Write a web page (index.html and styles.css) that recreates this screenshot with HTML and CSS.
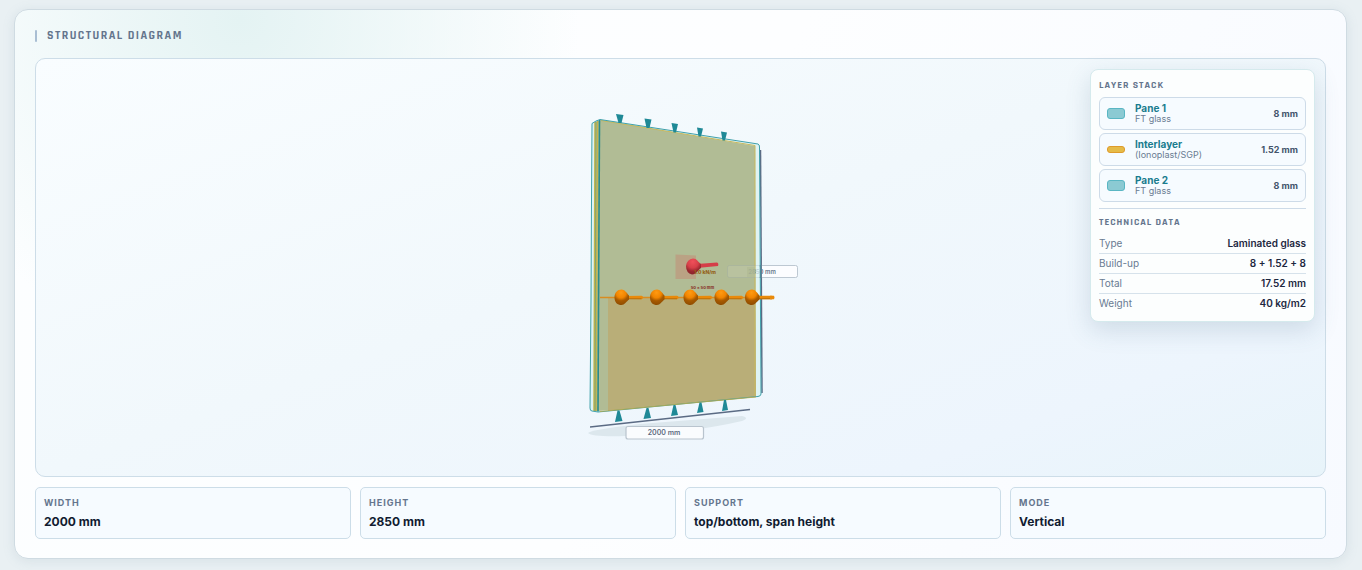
FILE: index.html
```html
<!DOCTYPE html>
<html lang="en">
<head>
<meta charset="utf-8">
<meta name="viewport" content="width=device-width, initial-scale=1">
<title>Structural Diagram</title>
<link rel="stylesheet" href="styles.css">
</head>
<body>
<main class="card">
  <h1 class="card-title">Structural Diagram</h1>
  <section class="stage">
    <svg class="scene" viewBox="550 59 261 417" role="img" aria-label="Laminated glass pane with supports and loads">
      <defs>
        <radialGradient id="orange" cx="0.45" cy="0.2" r="0.85">
          <stop offset="0" stop-color="#ff9a12"/><stop offset="0.4" stop-color="#f08400"/><stop offset="0.62" stop-color="#a85a00"/><stop offset="1" stop-color="#8a4a00"/>
        </radialGradient>
        <radialGradient id="red" cx="0.45" cy="0.2" r="0.85">
          <stop offset="0" stop-color="#f0505a"/><stop offset="0.45" stop-color="#d63f48"/><stop offset="0.7" stop-color="#9c2830"/><stop offset="1" stop-color="#84222a"/>
        </radialGradient>
        <g id="load">
          <path d="M4-1.600 20-1.800Q21.500-1.800 21.500 0T20 1.800L4 1.600Z" fill="#e98a0a"/>
          <path d="M4 .8H20V1.700H4Z" fill="#b56c0c"/>
          <path d="M-7 0C-7-5-4-8 0-8 3-8 5-5 7.500-2V2C5 4 3 7.500 0 7.500-4 7.500-7 5-7 0Z" fill="url(#orange)"/>
        </g>
      </defs>
      <path d="M588 433 Q590 430 640 424 L742 416 Q750 418 742 421 Q690 433 625 436 Q592 437 588 433Z" fill="#dce7ed"/>
      <path d="M590 427 750 409.500" stroke="#5b6b84" stroke-width="1.500"/>
      <path d="M760.500 150 762 393" stroke="#5b6b84" stroke-width="1.500"/>
      <path d="M592 123 600 119.500 759 144.500 761 396 597 412 590 410Z" fill="#def3f4"/>
      <path d="M595 122 601 120 755 146 756 397 598 411 594 411Z" fill="#b1bc95"/>
      <path d="M608 297.500H755L756 397 608 411Z" fill="#b9ae78"/>
      <path d="M595 122 594 411M597.500 121 596 411" stroke="#c3b54b" stroke-width="1.500"/>
      <path d="M601 120.500 755 145.500V396" fill="none" stroke="#c9b95d"/>
      <path d="M596 122 595 411" stroke="#699a6f" stroke-width=".7"/>
      <path d="M599.500 120 598 411.500" stroke="#2a8b88" stroke-width="1.600"/>
      <path d="M592 123.500 596 121 600 119.500 758 144Q759.500 144.500 759.500 147L761 394Q761 396 758 396.500L598 412 592 411Q590 411 590 408L591 300 591.500 200Z" fill="none" stroke="#3fa0aa"/>
      <path d="M756 397 600 411.500" stroke="#d0ac35" stroke-width=".7"/>
      <g fill="#1f8996">
        <path d="M616 114 623.500 115 621.500 123H618.500Z"/>
        <path d="M644.500 118.500 651.500 119.500 649.500 128H646.500Z"/>
        <path d="M671.500 123 678 124 676 132.500H673.500Z"/>
        <path d="M697 127.500 703 128.500 701 136.500H698.500Z"/>
        <path d="M721 131.500 727 132.500 725 140.500H722.500Z"/>
        <path d="M617.500 410.500H619.500L622.500 421 615 422Z"/>
        <path d="M646.500 408H648.500L651 418 643.500 419Z"/>
        <path d="M673.500 405H675.500L678 415 671 416Z"/>
        <path d="M699.500 402.500H701.500L703.500 412 697 413Z"/>
        <path d="M724 400H726L728 410 722 411Z"/>
      </g>
      <path d="M675.500 254.500 696 255.500V279H675.500Z" fill="#baa284"/>
      <path d="M600 297.500H755" stroke="#d98c20" stroke-width="1.500"/>
      <use href="#load" x="621.500" y="297.500"/>
      <use href="#load" x="657" y="297.500"/>
      <use href="#load" x="690.500" y="297.500"/>
      <use href="#load" x="721.500" y="297.500"/>
      <use href="#load" x="752" y="297.500"/>
      <path d="M770 295.700H774Q775 297.500 774 299.300H770Z" fill="#e98a0a"/>
      <path d="M697 264 717 262.500Q719 263 718 266L697 268Z" fill="#d53e48"/>
      <path d="M686 266Q687 259 693 258.500C697 258.500 698 262 701 264V268C698 270 697 274 692 274.500Q686 273 686 266Z" fill="url(#red)"/>
      <text class="load-text line-text" x="705" y="273.500">1.0 kN/m</text>
      <text class="load-text" x="702.500" y="289">50 x 50 mm</text>
      <rect x="727.500" y="265.500" width="70" height="12" rx="2" fill="#fff" fill-opacity=".1" stroke="#8898a6" stroke-opacity=".2"/>
      <path d="M762 265.500H795.500Q797.500 265.500 797.500 267.500V275.500Q797.500 277.500 795.500 277.500H762Z" fill="#fcfdff"/>
      <path d="M762 265.500H795.500Q797.500 265.500 797.500 267.500V275.500Q797.500 277.500 795.500 277.500H762" fill="none" stroke="#bdc8d2"/>
      <text class="dim-text side" x="762" y="274">2850 mm</text>
      <path d="M747 267H755V277H747Z" fill="#b1bc95" opacity=".8"/>
      <path d="M756 267H760V277H756Z" fill="#def3f4" opacity=".7"/>
      <path d="M760.500 265V278" stroke="#4c8c9b" stroke-width="1.500"/>
      <rect x="626" y="426.500" width="77.500" height="12.500" rx="2" fill="#fafcfe" stroke="#b9c4ce" stroke-width="1.200"/>
      <text class="dim-text" x="664" y="435">2000 mm</text>
    </svg>
    <aside class="panel">
      <h2 class="panel-title">Layer Stack</h2>
      <ul class="layers">
        <li class="layer"><span class="swatch"></span><span class="layer-name"><strong>Pane 1</strong><small>FT glass</small></span><b class="thickness">8 mm</b></li>
        <li class="layer"><span class="swatch swatch-film"></span><span class="layer-name"><strong>Interlayer</strong><small>(Ionoplast/SGP)</small></span><b class="thickness">1.52 mm</b></li>
        <li class="layer"><span class="swatch"></span><span class="layer-name"><strong>Pane 2</strong><small>FT glass</small></span><b class="thickness">8 mm</b></li>
      </ul>
      <div class="technical">
        <h2 class="panel-title">Technical Data</h2>
        <dl class="facts">
          <div class="fact"><dt>Type</dt><dd>Laminated glass</dd></div>
          <div class="fact"><dt>Build-up</dt><dd>8 + 1.52 + 8</dd></div>
          <div class="fact"><dt>Total</dt><dd>17.52 mm</dd></div>
          <div class="fact"><dt>Weight</dt><dd>40 kg/m2</dd></div>
        </dl>
      </div>
    </aside>
  </section>
  <dl class="stats">
    <div class="stat"><dt>Width</dt><dd>2000 mm</dd></div>
    <div class="stat"><dt>Height</dt><dd>2850 mm</dd></div>
    <div class="stat"><dt>Support</dt><dd>top/bottom, span height</dd></div>
    <div class="stat"><dt>Mode</dt><dd>Vertical</dd></div>
  </dl>
</main>
</body>
</html>
```
FILE: styles.css
```css
* { box-sizing: border-box; }
body {
  margin: 0;
  padding: 9px 15px 11px 14px;
  background: #e9f0f3;
  color: #17213a;
  font-family: Inter, "Liberation Sans", sans-serif;
}
h1, h2, ul, dl, dd { margin: 0; padding: 0; }
.card {
  padding: 20px 20px 19px;
  border: 1px solid #cfdbe2;
  border-radius: 14px;
  background:
    radial-gradient(circle at 225px 10px, #e4f3f3 0, #e7f5f500 340px),
    linear-gradient(115deg, #fcfeff 0%, #fdfeff 50%, #f7faff 100%);
  box-shadow: 0 2px 12px #708da126;
}
.card-title {
  display: flex;
  align-items: center;
  gap: 10px;
  margin-bottom: 16px;
  color: #64758d;
  font: 700 12px/12px Rajdhani, "Liberation Sans Narrow", "Roboto Condensed", Roboto, sans-serif;
  letter-spacing: 0.12em;
  text-transform: uppercase;
}
.card-title::before { content: ""; width: 2px; height: 12px; border-radius: 1px; background: #a9bed3; }
.stage {
  position: relative;
  border: 1px solid #cddde8;
  border-radius: 10px;
  background: linear-gradient(160deg, #f9fdff 0%, #f1f8fc 47%, #edf5fd 82%, #e8f4fa 100%);
}
.scene { display: block; width: 100%; height: 417px; }
.dim-text { fill: #5e6b80; font-size: 7px; font-weight: 600; text-anchor: middle; }
.side { fill: #69788c; font-size: 6px; }
.load-text { fill: #8c3e30; font-size: 4px; font-weight: 800; text-anchor: middle; }
.line-text { fill: #946018; font-size: 5px; }
.panel {
  position: absolute;
  top: 10px;
  right: 10px;
  width: 225px;
  padding: 10px 8px 8px;
  border: 1px solid #d5eaed;
  border-radius: 8px;
  background: #fcfefe;
  box-shadow: 0 8px 24px #47698330;
}
.panel-title {
  color: #64758d;
  font: 700 10px/11px Rajdhani, "Liberation Sans Narrow", "Roboto Condensed", Roboto, sans-serif;
  letter-spacing: 1px;
  text-transform: uppercase;
}
.layers { display: grid; gap: 3px; margin-top: 6px; list-style: none; }
.layer {
  display: flex;
  align-items: center;
  min-height: 33px;
  padding: 0 7px;
  border: 1px solid #cddbe8;
  border-radius: 6px;
  background: #f6fbff;
}
.swatch { width: 18px; height: 11px; border: 1px solid #59b6c3; border-radius: 3px; background: #8bcad3; }
.swatch-film { height: 7px; border-color: #df9b2b; background: #e5bb48; }
.layer-name { display: grid; flex: 1; margin-left: 10px; }
.layer-name strong { color: #197c8e; font-size: 10px; line-height: 11px; }
.layer-name small { color: #697b92; font-size: 9px; line-height: 10px; }
.thickness { color: #43546b; font-size: 9px; }
.technical { margin-top: 6px; padding-top: 8px; border-top: 1px solid #cddbe8; }
.facts { margin-top: 6px; }
.fact { display: flex; justify-content: space-between; font-size: 10px; line-height: 19px; }
.fact + .fact { border-top: 1px solid #d6e2eb; }
.fact dt { color: #697b92; }
.fact dd { color: #1d273f; font-weight: 600; }
.stats { display: grid; grid-template-columns: repeat(4, 1fr); gap: 9px; margin-top: 10px; }
.stat { padding: 8px; border: 1px solid #ccdde8; border-radius: 5px; background: #f6fbff; }
.stat dt { color: #64758d; font-size: 9px; font-weight: 700; line-height: 14px; letter-spacing: 1px; text-transform: uppercase; }
.stat dd { margin-top: 4px; color: #111b31; font-size: 12px; font-weight: 700; line-height: 16px; }
@media (max-width: 700px) {
  .stats { grid-template-columns: repeat(2, 1fr); }
  .panel { position: static; width: auto; margin: 10px; }
}
```
